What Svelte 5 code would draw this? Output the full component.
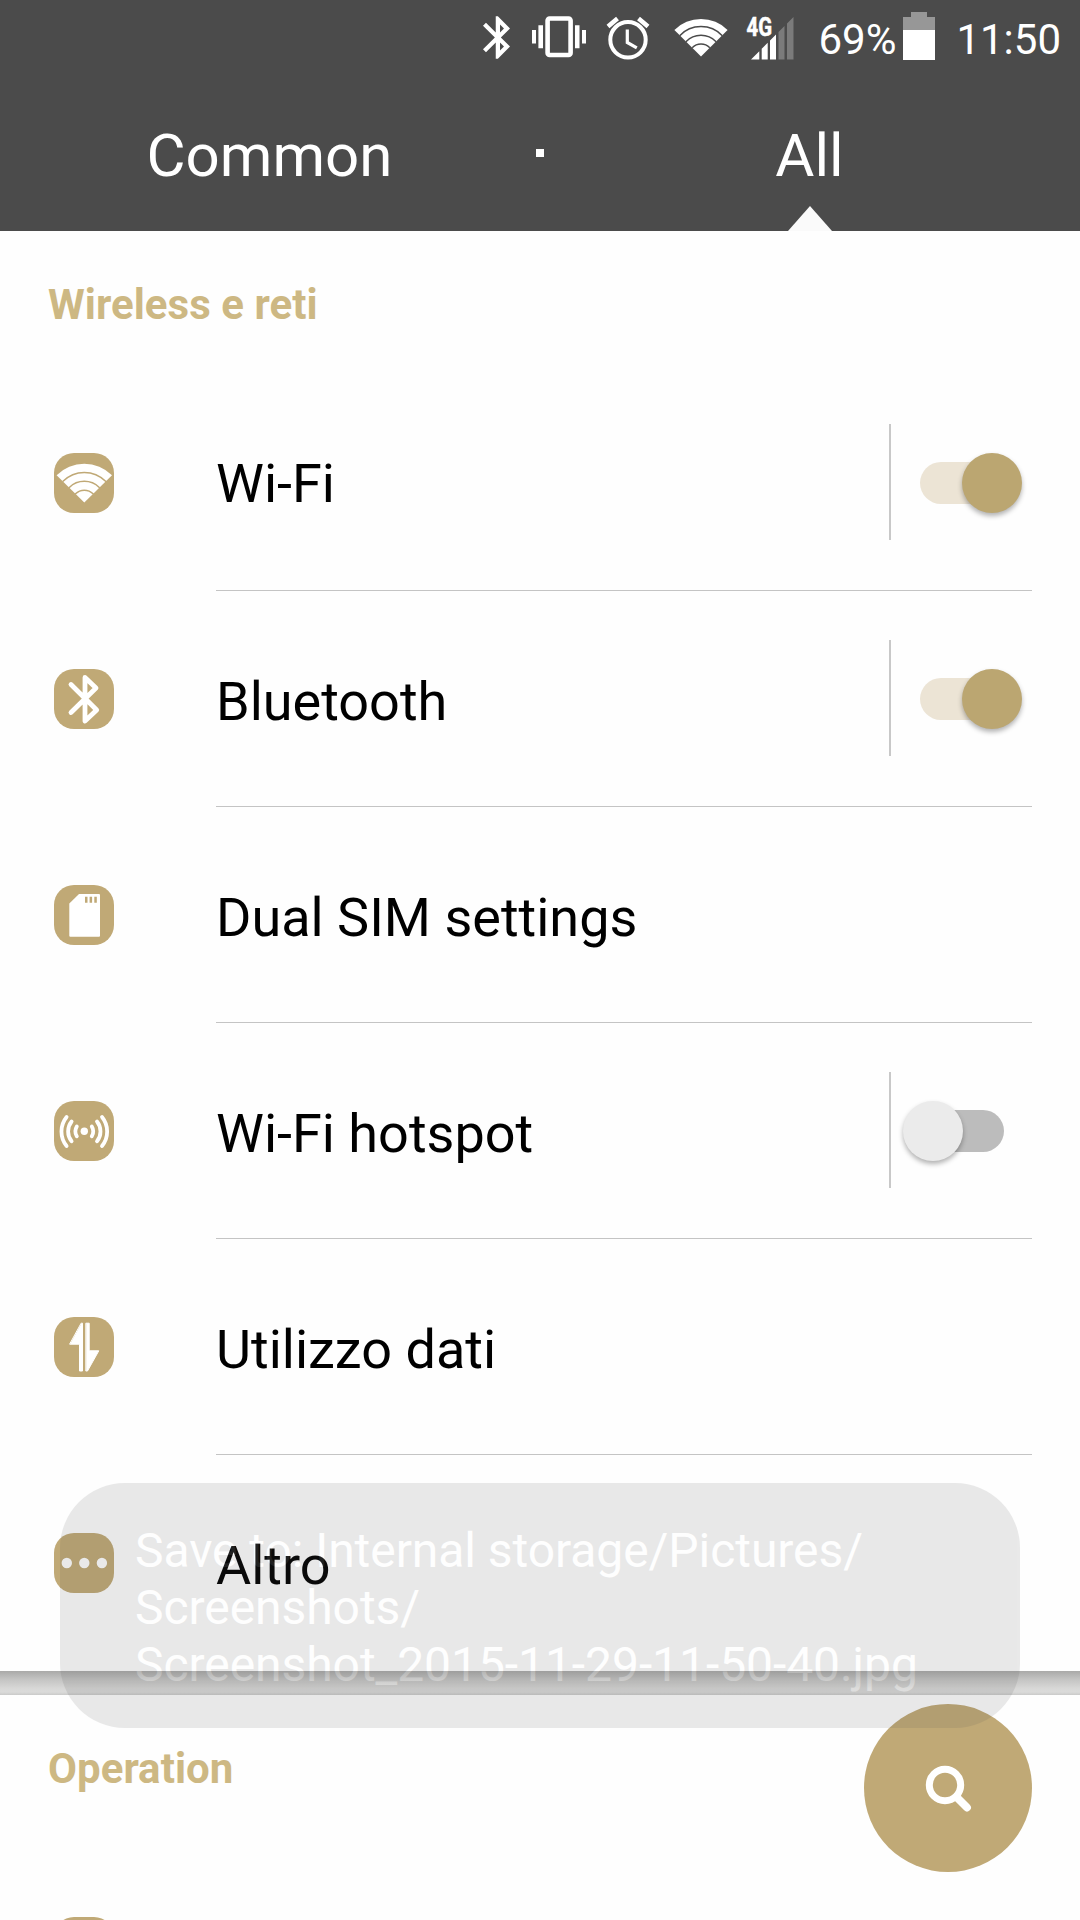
<script lang="ts">
  type IconName = 'wifi' | 'bluetooth' | 'sim' | 'hotspot' | 'data' | 'more';

  interface Item {
    icon: IconName;
    label: string;
    on?: boolean;
  }

  let items = $state<Item[]>([
    { icon: 'wifi', label: 'Wi-Fi', on: true },
    { icon: 'bluetooth', label: 'Bluetooth', on: true },
    { icon: 'sim', label: 'Dual SIM settings' },
    { icon: 'hotspot', label: 'Wi-Fi hotspot', on: false },
    { icon: 'data', label: 'Utilizzo dati' },
    { icon: 'more', label: 'Altro' }
  ]);
</script>

<div class="screen">
  <header>
    <div class="status">
      <svg class="bt" viewBox="5 2 12.71 20" width="27" height="43" fill="#fff"><path d="M17.71 7.71L12 2h-1v7.59L6.41 5 5 6.41 10.59 12 5 17.59 6.41 19 11 14.41V22h1l5.71-5.71-4.3-4.29 4.3-4.29zM13 5.83l1.88 1.88L13 9.59V5.83zm1.88 10.46L13 18.17v-3.76l1.88 1.88z" /></svg>
      <svg class="vibrate" viewBox="0 0 54 44" width="54" height="44" fill="#fff">
        <rect x="15.6" y="3.5" width="23" height="36.5" rx="2" fill="none" stroke="#fff" stroke-width="4.6" />
        <path d="M0 15h4v13.600H0zM6.400 10.300H11v23H6.400zM43 10.300h4.500v23H43zM50 15h4v13.600h-4z" />
      </svg>
      <svg class="alarm" viewBox="0 0 44 44" width="44" height="44" fill="none" stroke="#fff">
        <circle cx="22" cy="23.800" r="17.700" stroke-width="4" />
        <path d="M21.300 13.500V26.500l9.500 5.300" stroke-width="3.200" />
        <path d="M2 10.500L11.500 2.500M32.500 2.500L42 10.500" stroke-width="4.500" />
      </svg>
      <svg class="wifi" viewBox="0 0 54 44" width="54" height="44" fill="none">
        <path d="M27 40.500L.4 13.900A37.700 37.700 0 0 1 53.600 13.900z" fill="#fff" />
        <path d="M5.700 19.700a29.500 29.500 0 0 1 42.600 0M11.900 25.700a21 21 0 0 1 30.200 0M18.200 31.800a12.300 12.300 0 0 1 17.600 0" stroke="#4b4b4b" stroke-width="1.500" />
      </svg>
      <svg class="signal" viewBox="0 0 48 44" width="48" height="44">
        <path d="M5 43.500l8.300-8.300v8.300zM15.700 43.500V32.800l6-6v16.700zM24 43.500V24.500l6-6v25z" fill="#fff" />
        <path d="M32.500 43.500V16l6-6v33.500zM41 43.500V7.500L47.500 1v42.500z" fill="#7b7b7b" />
        <text x="0.500" y="20" textLength="25.500" lengthAdjust="spacingAndGlyphs" fill="#fff" stroke="#fff" stroke-width="0.6">4G</text>
      </svg>
      <span class="percent">69%</span>
      <svg class="battery" viewBox="0 0 32 48" width="32" height="48">
        <path d="M8 0h16v5h8v13H0V5h8z" fill="#979797" />
        <path d="M0 18h32v30H0z" fill="#fff" />
      </svg>
      <span class="time">11:50</span>
    </div>
    <nav>
      <button type="button">Common</button>
      <span class="dot"></span>
      <button type="button" class="active">All</button>
    </nav>
  </header>

  <section>
    <h2>Wireless e reti</h2>
    <ul>
      {#each items as item (item.label)}
        <li>
          <span class="tile">
            <svg viewBox="0 0 60 60" width="60" height="60" fill="none" stroke-linecap="round" stroke-linejoin="round">
              {#if item.icon === 'wifi'}
                <path d="M30.300 49.500L2.600 22.300A39.200 39.200 0 0 1 58 22.300z" fill="#fff" />
                <path d="M9 28.300a30 30 0 0 1 42.600 0M15.300 34.500a21.200 21.200 0 0 1 30 0M21.500 40.800a12.400 12.400 0 0 1 17.600 0" stroke="#c0a976" stroke-width="1.500" />
              {:else if item.icon === 'bluetooth'}
                <path d="M17 15.500L42.700 41 31 52V8.500L42 19 17 43.500" stroke="#fff" stroke-width="4.800" />
              {:else if item.icon === 'sim'}
                <path d="M25 9h20a1 1 0 0 1 1 1v40.700a1 1 0 0 1-1 1H16.300a1 1 0 0 1-1-1V18.500z" fill="#fff" />
                <path d="M31 11.700h2.500v6H31zM35.600 11.700h2.500v6h-2.500zM40.300 11.700h2.500v6h-2.500z" fill="#c0a976" />
              {:else if item.icon === 'hotspot'}
                <circle cx="30.300" cy="30.300" r="3.700" fill="#fff" />
                <path d="M37.800 25.500a9.500 9.500 0 0 1 0 9.800M43 20.500a15.800 15.800 0 0 1 0 19.800M48 16a23 23 0 0 1 0 29M22.800 25.500a9.500 9.500 0 0 0 0 9.800M17.600 20.500a15.800 15.800 0 0 0 0 19.800M12.600 16a23 23 0 0 0 0 29" stroke="#fff" stroke-width="3.800" />
              {:else if item.icon === 'data'}
                <path d="M27.500 6.200H28.500V54H25.500V27.200H16zM32.200 6.200h3v27.600h9.600L33.500 54h-1.300z" fill="#fff" stroke="#fff" />
              {:else}
                <path d="M12.800 30h0M30.300 30h0M47.900 30h0" stroke="#fff" stroke-width="10.400" />
              {/if}
            </svg>
          </span>
          <div class="body">
            <span class="label">{item.label}</span>
            {#if item.on !== undefined}
              <span class="rule"></span>
              <button
                type="button"
                class="switch"
                class:on={item.on}
                role="switch"
                aria-checked={item.on}
                aria-label={item.label}
                onclick={() => (item.on = !item.on)}
              >
                <span class="thumb"></span>
              </button>
            {/if}
          </div>
        </li>
      {/each}
    </ul>
  </section>

  <div class="gap"></div>

  <section>
    <h2>Operation</h2>
    <ul>
      <li><span class="tile"></span></li>
    </ul>
  </section>

  <button type="button" class="fab" aria-label="Search">
    <svg viewBox="0 0 48 48" width="48" height="48" fill="none" stroke="#fff" stroke-linecap="round">
      <circle cx="21" cy="21" r="15.700" stroke-width="7" />
      <path d="M33 33.500L43 43.500" stroke-width="7.800" />
    </svg>
  </button>

  <div class="toast">Save to: Internal storage/Pictures/<br />Screenshots/<br />Screenshot_2015-11-29-11-50-40.jpg</div>
</div>

<style>
  :global(body) {
    margin: 0;
    background: #fefefe;
  }
  .screen {
    position: relative;
    width: 1080px;
    height: 1920px;
    overflow: hidden;
    background: #fefefe;
    color: #000;
    font-family: Roboto, sans-serif;
  }
  button {
    padding: 0;
    border: none;
    background: none;
    color: inherit;
    font: inherit;
    cursor: pointer;
  }
  svg {
    display: block;
    flex-shrink: 0;
    overflow: visible;
  }
  header {
    height: 231px;
    background: #4b4b4b;
    color: #fff;
  }
  .status {
    display: flex;
    justify-content: flex-end;
    align-items: flex-start;
    height: 75px;
    padding-right: 19px;
    box-sizing: border-box;
    font-size: 42px;
    line-height: 50px;
  }
  .bt {
    margin: 16px 22px 0 0;
  }
  .vibrate {
    margin: 15px 20px 0 0;
  }
  .alarm {
    margin: 15.5px 24px 0 0;
  }
  .wifi {
    margin: 15.5px 18px 0 0;
  }
  .signal {
    margin: 15.5px 24px 0 0;
    font-size: 26px;
    font-weight: 700;
  }
  .percent {
    margin: 15px 7px 0 0;
  }
  .battery {
    margin: 12px 21px 0 0;
  }
  .time {
    margin-top: 15px;
  }
  nav {
    display: flex;
    align-items: center;
    height: 156px;
  }
  nav button {
    position: relative;
    flex: 1;
    height: 156px;
    padding: 5px 1px 0 0;
    font-size: 60px;
    line-height: 151px;
  }
  .dot {
    width: 8px;
    height: 8px;
    margin: 0 -4px;
    background: #fff;
  }
  .active::after {
    content: '';
    position: absolute;
    left: 50%;
    bottom: 0;
    margin-left: -22px;
    border: 22px solid transparent;
    border-top: 0;
    border-bottom: 25px solid #fafafa;
  }
  h2 {
    margin: 0;
    height: 144px;
    padding: 49px 48px 0;
    box-sizing: border-box;
    font-size: 42px;
    font-weight: 700;
    line-height: 49px;
    letter-spacing: 0.04px;
    color: #cdb883;
  }
  ul {
    margin: 0;
    padding: 0;
    list-style: none;
  }
  li {
    display: flex;
    align-items: center;
    height: 216px;
    padding: 0 48px 0 54px;
  }
  .tile {
    width: 60px;
    height: 60px;
    margin-right: 102px;
    border-radius: 20px;
    background: #c0a976;
  }
  .body {
    flex: 1;
    display: flex;
    align-items: center;
    height: 216px;
    box-sizing: border-box;
    border-bottom: 1px solid #c4c4c4;
  }
  li:last-child .body {
    border-color: transparent;
  }
  .label {
    flex: 1;
    padding-top: 6px;
    font-size: 54px;
    line-height: 64px;
  }
  /* the first row sits slightly higher than the rest */
  li:first-child .label {
    padding-top: 2px;
  }
  .rule {
    width: 1.5px;
    height: 116px;
    margin-bottom: 1px;
    background: #c8c8c8;
  }
  .switch {
    position: relative;
    width: 84px;
    height: 42px;
    margin: 1px 28px 0 29.5px;
    border-radius: 21px;
    background: #bcbcbc;
  }
  .thumb {
    position: absolute;
    top: -9.5px;
    left: -17.5px;
    width: 60px;
    height: 60px;
    border-radius: 50%;
    background: #ebebeb;
    box-shadow: 0 3px 5px rgba(0, 0, 0, 0.3);
  }
  .switch.on {
    background: #ece4d5;
  }
  .on .thumb {
    left: 41.5px;
    background: #bba671;
  }
  .gap {
    height: 24px;
    background: linear-gradient(#a9a9a8, #c4c4c3 35%, #d9d9d8 75%, #dadad9 88%, #cacac9);
  }
  .fab {
    position: absolute;
    right: 48px;
    bottom: 48px;
    width: 168px;
    height: 168px;
    border-radius: 50%;
    background: #c0a976;
    display: grid;
    place-items: center;
  }
  .toast {
    position: absolute;
    left: 60px;
    top: 1483px;
    width: 960px;
    height: 245px;
    padding: 39px 75px 0;
    box-sizing: border-box;
    border-radius: 65px;
    background: #555;
    color: #fff;
    font-size: 48px;
    line-height: 57px;
    letter-spacing: -0.06px;
    white-space: nowrap;
    opacity: 0.125;
  }
</style>
